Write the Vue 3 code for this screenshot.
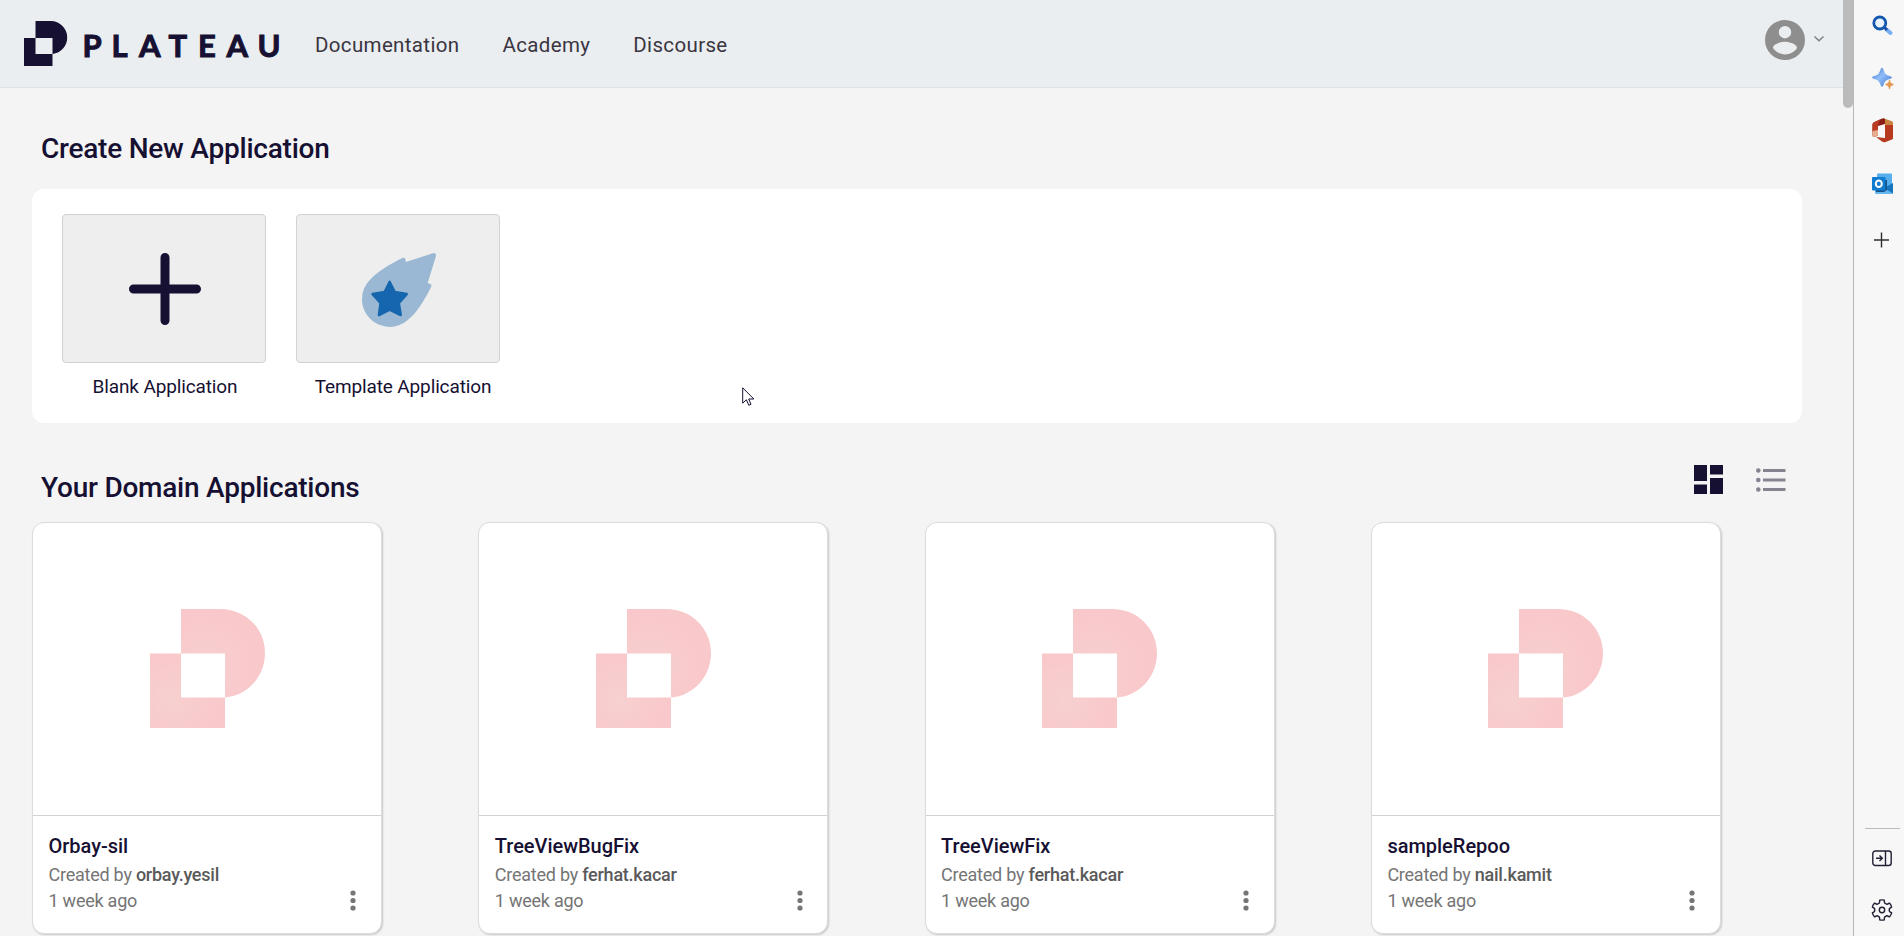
<script setup>
const links = ['Documentation', 'Academy', 'Discourse']
const apps = [
  { name: 'Orbay-sil', author: 'orbay.yesil', age: '1 week ago' },
  { name: 'TreeViewBugFix', author: 'ferhat.kacar', age: '1 week ago' },
  { name: 'TreeViewFix', author: 'ferhat.kacar', age: '1 week ago' },
  { name: 'sampleRepoo', author: 'nail.kamit', age: '1 week ago' },
]

// Six-lobed outline of the settings gear
const polar = (deg, r) => {
  const a = (deg * Math.PI) / 180
  return `${(11 + r * Math.cos(a)).toFixed(2)} ${(11 + r * Math.sin(a)).toFixed(2)}`
}
const gear = [0, 1, 2, 3, 4, 5]
  .map((k) => {
    const t = k * 60 - 90
    return `${k ? 'L' : 'M'}${polar(t - 13, 10.1)} Q${polar(t, 10.5)} ${polar(t + 13, 10.1)} L${polar(t + 17, 8.2)} Q${polar(t + 22, 6.9)} ${polar(t + 30, 7.5)} Q${polar(t + 38, 6.9)} ${polar(t + 43, 8.2)}`
  })
  .join(' ') + 'Z'
</script>

<template>
  <div class="window">
    <div class="page">
      <header class="topbar">
        <svg class="brand" width="262" height="48" viewBox="0 0 262 48">
          <path fill="#161032" fill-rule="evenodd" d="M11.5 1H27a16.5 16.5 0 0 1 1.500 32.900V46H0V18H11.500ZM11.500 18V34H28.500V18Z" />
          <text class="wordmark" y="37" x="58.500 87.500 115 144.500 174 202.500 233.500">PLATEAU</text>
        </svg>
        <nav class="links">
          <a v-for="l in links" :key="l">{{ l }}</a>
        </nav>
        <div class="account">
          <svg width="48" height="48" viewBox="0 0 24 24"><path fill="#8e8e8e" fill-rule="evenodd" d="M12 2a10 10 0 1 0 0 20a10 10 0 0 0 0-20ZM12 5a3.100 3.100 0 1 1 0 6.200a3.100 3.100 0 0 1 0-6.200ZM12 19.200c-2.500 0-4.710-1.280-6-3.220c.030-1.990 4-3.080 6-3.080s5.970 1.090 6 3.080c-1.290 1.940-3.500 3.220-6 3.220Z" /></svg>
          <svg width="12" height="8" viewBox="0 0 12 8"><path d="M1.500 1.500L6 5.700L10.500 1.500" fill="none" stroke="#7d8083" stroke-width="1.500" /></svg>
        </div>
      </header>

      <main>
        <h2 class="create-title">Create New Application</h2>
        <section class="panel">
          <div class="choice blank">
            <div class="tile">
              <svg width="72" height="72" viewBox="0 0 72 72"><path d="M36 4.500V67.500M4.500 36H67.500" stroke="#161032" stroke-width="9" stroke-linecap="round" /></svg>
            </div>
            <span>Blank Application</span>
          </div>
          <div class="choice template">
            <div class="tile">
              <svg width="74" height="74" viewBox="0 0 222 222">
                <path fill="#9ab8d3" d="M132 27L212 1Q223-2 222 9L197 90L205 93Q210 96 207 103Q170 175 143 196A83 83 0 0 1 0 138Q0 105 24 80C45 58 80 35 121 15Q128 13 130 18Z" />
                <path fill="#1566ae" stroke="#1566ae" stroke-width="8" stroke-linejoin="round" d="M83 87L98 117L134 123L110 150L116 186L83 170L51 186L56 150L32 123L68 117Z" />
              </svg>
            </div>
            <span>Template Application</span>
          </div>
        </section>

        <div class="list-head">
          <h2>Your Domain Applications</h2>
          <div class="views">
            <svg width="29" height="29" viewBox="0 0 29 29" fill="#161032"><path d="M0 0H13V16H0ZM0 19.500H13V29H0ZM16 0H29V9.500H16ZM16 13H29V29H16Z" /></svg>
            <svg class="list-icon" width="30" height="24" viewBox="0 0 30 24" fill="#85838f"><circle cx="2.300" cy="2.500" r="2.300" /><circle cx="2.300" cy="12" r="2.300" /><circle cx="2.300" cy="21.500" r="2.300" /><path d="M7 1H29.500V4H7ZM7 10.500H29.500V13.500H7ZM7 20H29.500V23H7Z" /></svg>
          </div>
        </div>

        <section class="cards">
          <article v-for="(a, i) in apps" :key="a.name" class="card">
            <div class="cover">
              <svg width="115" height="119" viewBox="0 0 115 119">
                <defs>
                  <radialGradient :id="'top' + i" gradientUnits="userSpaceOnUse" cx="54" cy="58" r="52"><stop offset="0" stop-color="#f7d0d0" /><stop offset="1" stop-color="#f9c8ca" /></radialGradient>
                  <radialGradient :id="'low' + i" gradientUnits="userSpaceOnUse" cx="23" cy="91" r="48"><stop offset="0" stop-color="#f7d0d0" /><stop offset="1" stop-color="#f9c8ca" /></radialGradient>
                </defs>
                <path :fill="`url(#top${i})`" d="M31 0H70C96 0 115 20 115 44C115 68 97 87 75 88.500V44.500H31Z" />
                <path :fill="`url(#low${i})`" d="M0 44.500H31V88.500H75V119H0Z" />
              </svg>
            </div>
            <div class="info">
              <h3>{{ a.name }}</h3>
              <p>Created by <b>{{ a.author }}</b></p>
              <p>{{ a.age }}</p>
              <svg class="more" width="6" height="21" viewBox="0 0 6 21" fill="#757575"><circle cx="3" cy="3" r="2.600" /><circle cx="3" cy="10.500" r="2.600" /><circle cx="3" cy="18" r="2.600" /></svg>
            </div>
          </article>
        </section>
      </main>
      <div class="thumb"></div>
      <svg class="cursor" width="13" height="20" viewBox="0 0 13 20"><path d="M.7.8V16.200L4.400 12.800L6.800 18.300L9 17.300L6.700 12H11.800Z" fill="#fff" stroke="#161032" stroke-width="1" /></svg>
    </div>

    <aside class="rail">
      <svg class="search" width="22" height="22" viewBox="0 0 22 22"><path d="M14.500 14.500L18.500 18" stroke="#79aef2" stroke-width="4" stroke-linecap="round" /><path d="M12.300 12.300L15 15" stroke="#1b4fa0" stroke-width="3" /><circle cx="7.800" cy="8" r="6" fill="#eaf4fd" stroke="#1458ad" stroke-width="2.800" /></svg>
      <svg class="spark" width="23" height="23" viewBox="0 0 23 23"><defs><linearGradient id="blue" x2="1" y2="1"><stop stop-color="#3568c7" /><stop offset=".45" stop-color="#91bff8" /><stop offset="1" stop-color="#3f72cf" /></linearGradient></defs><path fill="url(#blue)" d="M10 0.500Q11 0.500 12 4Q13 7.500 16 8.500Q20 9.500 20 10.500Q20 11.500 16 12.500Q13 13.500 12 16.500Q11 20 10 20Q9 20 8 16.500Q7 13.500 4 12.500Q0 11.500 0 10.500Q0 9.500 4 8.500Q7 7.500 8 4Q9 .5 10 .5Z" /><path fill="#e39a50" stroke="#f7f7f7" stroke-width=".8" d="M17.500 12.500Q18.500 12.500 19 15.500Q22 16.500 22 17.500Q22 18.500 19 19.500Q18.500 22.500 17.500 22.500Q16.500 22.500 16 19.500Q13 18.500 13 17.500Q13 16.500 16 15.500Q16.500 12.500 17.500 12.500Z" /></svg>
      <svg class="office" width="22" height="25" viewBox="0 0 22 25"><path fill="#b73a20" d="M13 5V20L4 19L10 23.500Q11.500 24.700 13.500 24L20 21.500Q21 21 21 20V4.500L13 2Z" /><path fill="#c98342" d="M12 .5L19.500 3Q21 3.500 21 5V7H13Z" /><path fill="#8c1e18" d="M13 .7V6L6 8V17.500L2.500 19Q.5 19.500.5 17V6.500Q.5 5 2 4.300L9.500.8Q11.500 0 13 .7Z" /><path fill="#b93b22" d="M6 8V14H.5V6.500Q.5 5 2 4.300L8 1.500Z" /><path fill="#e8ad8d" d="M.5 13L6 12V17.500L2.500 19Q.5 19.500.5 17Z" /></svg>
      <svg class="outlook" width="22" height="22" viewBox="0 0 22 22"><rect x="5" y=".5" width="15" height="13" rx="1" fill="#56aeed" /><path fill="#2f91d9" d="M5 5H13V12H5Z" /><path fill="#65b8ef" d="M3 13H21V20Q21 21 20 21H4Q3 21 3 20Z" /><path fill="#1675bd" d="M21 10V20.500L12 15Z" /><path fill="#175089" d="M13 7H15V17L12 19H4V16Z" /><rect y="4" width="13.500" height="13.500" rx="1" fill="#117bcf" /><ellipse cx="6.800" cy="10.700" rx="3" ry="3.300" fill="none" stroke="#fff" stroke-width="2" /></svg>
      <svg class="add" width="16" height="16" viewBox="0 0 16 16"><path d="M7.500 .5V15.500M0 8H15" stroke="#2c2c2c" stroke-width="1.400" /></svg>
      <div class="bottom">
        <svg class="dock" width="20" height="17" viewBox="0 0 20 17" fill="none" stroke="#241f34" stroke-width="1.400"><rect x=".8" y="1" width="18.400" height="14.500" rx="2.500" /><path d="M13.500 1V15.500M4 8.200H10M7.500 5.400L10.300 8.200L7.500 11" /></svg>
        <svg class="gear" width="22" height="22" viewBox="0 0 22 22" fill="none" stroke="#241f34" stroke-width="1.400" stroke-linejoin="round"><path :d="gear" /><circle cx="11" cy="11" r="2.700" /></svg>
      </div>
    </aside>
  </div>
</template>

<style>
body { margin: 0; overflow: hidden; }
</style>

<style scoped>
.window { display: flex; width: 1904px; height: 936px; overflow: hidden; font-family: Roboto, sans-serif; color: #161032; }
.page { position: relative; width: 1853px; height: 936px; overflow: hidden; background: #f4f4f4; }
.topbar { display: flex; box-sizing: border-box; height: 88px; padding-left: 24px; background: #ebeef1; border-bottom: 1px solid #dfe1e4; }
.brand { margin-top: 20px; overflow: visible; }
.wordmark { font: 700 31px Lato, sans-serif; fill: #161032; stroke: #161032; stroke-width: 1px; }
.links { display: flex; gap: 43px; margin: 31px 0 0 29px; font-size: 20.500px; line-height: 28px; letter-spacing: .35px; color: #3a3540; }
.account { display: flex; gap: 4px; margin: 16px 28px 0 auto; }
.account svg:last-child { margin-top: 19px; }
h2 { margin: 0; font-size: 28px; line-height: 36px; font-weight: 500; letter-spacing: -.23px; }
.create-title { padding: 43px 0 22px 41px; }
.panel { display: flex; gap: 30px; box-sizing: border-box; width: 1770px; height: 234px; margin-left: 32px; padding: 25px 30px; border-radius: 12px; background: #fff; }
.choice { width: 204px; display: flex; flex-direction: column; align-items: center; }
.tile { display: flex; flex: none; align-items: center; justify-content: center; box-sizing: border-box; width: 204px; height: 149px; padding: 1px 0 0 2px; border: 1px solid #d2d2d2; border-radius: 4px; background: #eee; }
.choice span { margin-top: 11px; font-size: 19px; line-height: 26px; letter-spacing: -.13px; white-space: nowrap; }
.blank span { padding-left: 2px; }
.template span { padding-left: 10px; }
.template .tile { padding-top: 3px; }
.list-head { display: flex; justify-content: space-between; height: 99px; padding-left: 41px; }
.list-head h2 { padding-top: 47px; }
.views { display: flex; gap: 33px; margin: 42px 67px 0 0; }
.list-icon { margin-top: 3px; }
.cards { display: flex; gap: 96.300px; margin-left: 32px; }
.card { flex: none; box-sizing: border-box; width: 350px; height: 412px; border: 1px solid #dcdcdc; border-radius: 12px; background: #fff; box-shadow: 1px 1px 2px #0000002e; }
.cover { display: flex; align-items: center; justify-content: center; box-sizing: border-box; height: 293px; padding-bottom: 2px; border-bottom: 1px solid #d2d2d2; }
.info { position: relative; padding: 17px 15.500px; }
h3 { margin: 0 0 3px; font-size: 20px; font-weight: 500; line-height: 26px; letter-spacing: -.02px; }
p { margin: 0; font-size: 18px; line-height: 26px; letter-spacing: -.24px; color: #757575; }
b { font-weight: 500; color: #5a5a5a; }
.more { position: absolute; right: 24.700px; top: 74px; }
.thumb { position: absolute; right: 0; top: -8px; width: 10px; height: 116px; border-radius: 5px; background: #bbb; }
.cursor { position: absolute; left: 742px; top: 387px; }
.rail { display: flex; flex-direction: column; align-items: flex-start; box-sizing: border-box; width: 51px; padding: 15px 0 0 18px; border-left: 1px solid #b8b8b8; background: #f7f7f7; }
.rail svg { flex: none; }
.spark { margin-top: 30px; }
.office { margin-top: 28px; }
.outlook { margin-top: 30px; }
.add { margin: 37px 0 0 2px; }
.bottom { display: flex; flex-direction: column; width: 35px; height: 108px; margin: auto 0 0 -7px; border-top: 1px solid #bbb; box-sizing: border-box; }
.dock { margin: 20.500px 0 0 7px; }
.gear { margin: 32px 0 0 6px; }
</style>
